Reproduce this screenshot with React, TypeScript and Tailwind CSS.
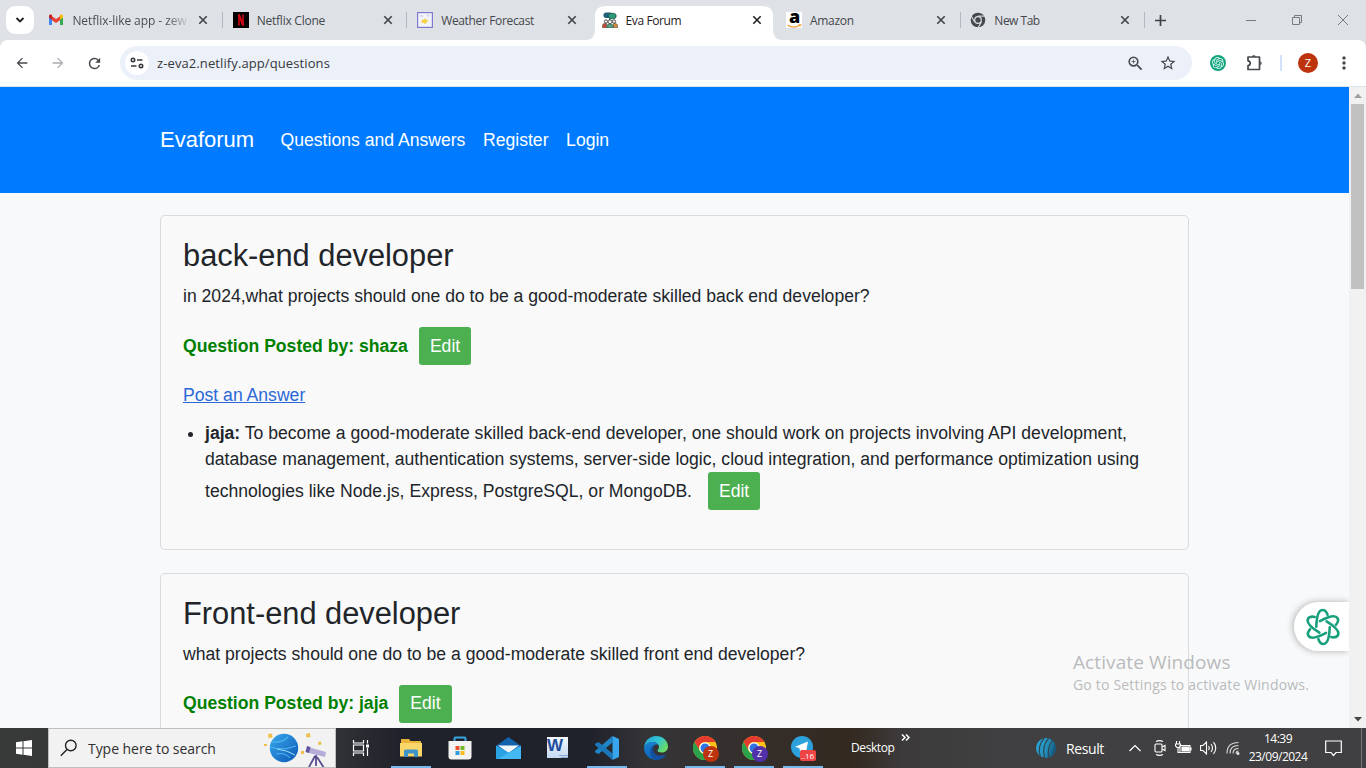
import React from "react";
import {
  MdArrowBack,
  MdArrowForward,
  MdRefresh,
  MdZoomIn,
  MdStarOutline,
  MdMoreVert,
} from "react-icons/md";
import { SiOpenai } from "react-icons/si";

const ui = "font-['Open_Sans','Noto_Sans',sans-serif]";

function GmailIcon() {
  return (
    <svg width="16" height="16" viewBox="0 0 16 16">
      <path d="M1 4v9h3V7z" fill="#4285f4" />
      <path d="M15 4v9h-3V7z" fill="#34a853" />
      <path d="M4 4.2v4L8 11l4-2.8v-4L8 7z" fill="#ea4335" />
      <path d="M1 4.2C1 2.6 2.6 2.2 3.8 3L4 3.2v4.6L1 5.8z" fill="#c5221f" />
      <path d="M15 4.2c0-1.6-1.6-2-2.8-1.2l-.2.2v4.6l3-2z" fill="#fbbc04" />
    </svg>
  );
}

function NetflixIcon() {
  return (
    <svg width="16" height="16" viewBox="0 0 16 16">
      <rect width="16" height="16" fill="#050000" />
      <path d="M5 2.5h2v11H5zM9 2.5h2v11H9z" fill="#a80710" />
      <path d="M5 2.5h2l4 11H9z" fill="#e50914" />
    </svg>
  );
}

function WeatherIcon() {
  return (
    <svg width="16" height="16" viewBox="0 0 16 16">
      <rect x=".6" y=".6" width="14.8" height="14.8" fill="#f3f4fb" stroke="#7f7ad0" strokeWidth="1.2" />
      <path d="M3 3h3v2H3zM9.500 2.500h3v2h-3z" fill="#d9dcf0" />
      <path d="M8 6l1.300 1.800 2.700.7-2.300 1.500-1.200 2.200-2-1.500-3 .3 1.500-2L4.500 8l2.500-.5z" fill="#f3d24a" />
    </svg>
  );
}

function ForumIcon() {
  return (
    <svg width="16" height="16" viewBox="0 0 16 16">
      <rect x="1.500" y=".5" width="9" height="5.500" rx="2.700" fill="#1f5f78" />
      <path d="M8 1.300h3.500a2.700 2.700 0 010 5.400H9L7.500 8V6a2.600 2.600 0 01.5-4.700z" fill="#2c9a76" stroke="#174a4c" strokeWidth=".7" />
      <circle cx="4" cy="9.500" r="1.700" fill="#f4ece6" stroke="#333" strokeWidth=".8" />
      <circle cx="12" cy="9.500" r="1.700" fill="#f4ece6" stroke="#333" strokeWidth=".8" />
      <circle cx="8" cy="9.800" r="1.900" fill="#fff" stroke="#333" strokeWidth=".8" />
      <path d="M.5 15.700v-2q0-2.200 2.300-2.200h1.700v4.200z" fill="#c9483c" stroke="#443" strokeWidth=".6" />
      <path d="M15.500 15.700v-2q0-2.200-2.300-2.200h-1.700v4.200z" fill="#d98b3a" stroke="#443" strokeWidth=".6" />
      <path d="M4.800 15.700v-1.500Q5 12 8 12t3.200 2.200v1.500z" fill="#4fa487" stroke="#343" strokeWidth=".6" />
    </svg>
  );
}

function AmazonIcon() {
  return (
    <span className="relative block h-4 w-4 bg-white">
      <span className="absolute -top-[7px] left-[3px] font-['Open_Sans',sans-serif] text-[18px] leading-[22px] font-extrabold text-black">a</span>
      <svg className="absolute top-0 left-0" width="16" height="16" viewBox="0 0 16 16">
        <path d="M1.500 13q6 4 12.500.3" fill="none" stroke="#f59a2f" strokeWidth="1.200" />
        <path d="M12.500 12.500l2.700-.2-1 2.300" fill="none" stroke="#f59a2f" strokeWidth=".8" />
      </svg>
    </span>
  );
}

function NewTabIcon() {
  return (
    <svg width="16" height="16" viewBox="-8 -8 16 16">
      <circle r="7.300" fill="#45484c" />
      <g stroke="#dee1e6" strokeWidth="1.100">
        {[0, 120, 240].map((a) => (
          <path key={a} transform={`rotate(${a})`} d="M0-3.900H7.500" />
        ))}
      </g>
      <circle r="3.900" fill="#dee1e6" />
      <circle r="2.700" fill="#45484c" />
    </svg>
  );
}

function Cross({ color }: { color: string }) {
  return (
    <svg width="10" height="10" viewBox="0 0 10 10" stroke={color} strokeWidth="1.600">
      <path d="M1.300 1.300l7.400 7.400M8.700 1.300l-7.400 7.400" />
    </svg>
  );
}

type TabInfo = { icon: React.ReactNode; title: string; cls: string; active?: boolean; sep?: boolean };

const tabs: TabInfo[] = [
  { icon: <GmailIcon />, title: "Netflix-like app - zew", cls: "tracking-[-0.060px]", sep: true },
  { icon: <NetflixIcon />, title: "Netflix Clone", cls: "tracking-[-0.250px]", sep: true },
  { icon: <WeatherIcon />, title: "Weather Forecast", cls: "tracking-[-0.350px]" },
  { icon: <ForumIcon />, title: "Eva Forum", cls: "tracking-[-0.400px]", active: true },
  { icon: <AmazonIcon />, title: "Amazon", cls: "tracking-[-0.300px]", sep: true },
  { icon: <NewTabIcon />, title: "New Tab", cls: "tracking-[-0.500px]", sep: true },
];

function Tab({ tab }: { tab: TabInfo }) {
  return (
    <div className="relative h-full w-[184.4px] shrink-0">
      {tab.active && (
        <svg className="absolute top-[6px] -left-[8px]" width="198" height="34" viewBox="0 0 198 34" fill="#fff">
          <path d="M0 34Q10 34 10 24V10Q10 0 20 0H178Q188 0 188 10V24Q188 34 198 34z" />
        </svg>
      )}
      <div className="relative flex h-full items-center pl-[8.400px]">
        <span className="flex h-4 w-4 items-center justify-center">{tab.icon}</span>
        <span
          className={
            "mt-[2px] ml-2 w-[118px] text-[12px] leading-[18px] whitespace-nowrap " +
            tab.cls +
            (tab.active ? " text-[#1f2023]" : " text-[#45484c]")
          }
        >
          <span className={tab.title.length > 20 ? "block bg-gradient-to-r from-[#45484c] from-80% to-[#dee1e6] bg-clip-text text-transparent" : "block"}>
            {tab.title}
          </span>
        </span>
        <span className="ml-[8px]"><Cross color={tab.active ? "#222" : "#3f4246"} /></span>
      </div>
      {tab.sep && <span className="absolute top-3 right-[1.400px] h-4 w-px bg-[#b4b8be]" />}
    </div>
  );
}

function TabStrip() {
  return (
    <div className="flex h-10 shrink-0 bg-[#dee1e6]">
      <div className="flex w-10 shrink-0 items-center">
        <div className="ml-[6px] flex h-7 w-7 items-center justify-center rounded-[9px] bg-white">
          <svg width="10" height="8" viewBox="0 0 10 8" fill="none" stroke="#202124" strokeWidth="1.800"><path d="M1.500 2L5 5.500 8.500 2" /></svg>
        </div>
      </div>
      {tabs.map((t) => <Tab key={t.title} tab={t} />)}
      <div className="flex items-center pl-[9px]">
        <svg width="11" height="11" viewBox="0 0 11 11" stroke="#3f4246" strokeWidth="1.700"><path d="M5.500 0v11M0 5.500h11" /></svg>
      </div>
      <div className="ml-auto flex items-center gap-[36px] pr-[18px]">
        <svg width="10" height="10" viewBox="0 0 10 10" stroke="#777a7e"><path d="M0 5.500h10" /></svg>
        <svg width="10" height="10" viewBox="0 0 10 10" fill="none" stroke="#777a7e"><path d="M.5 2.500h7v7h-7zM2.500 2.500v-2h7v7h-2" /></svg>
        <svg width="10" height="10" viewBox="0 0 10 10" stroke="#777a7e"><path d="M0 0l10 10M10 0L0 10" /></svg>
      </div>
    </div>
  );
}

function PuzzleIcon() {
  return (
    <svg className="ml-[20px]" width="18" height="18" viewBox="0 0 18 18" fill="none" stroke="#45484c" strokeWidth="1.700" strokeLinejoin="round">
      <path d="M2 3h11.500v12.500H2v-3.800Q4.200 11.300 4.200 9.200T2 6.800z" />
      <path d="M5.800 2.700a2.100 2.100 0 014 0zM14.200 7.300a2.100 2.100 0 010 4z" fill="#45484c" stroke="none" />
    </svg>
  );
}

function Toolbar() {
  return (
    <div className="shrink-0 bg-[#dee1e6]">
      <div className="flex h-[47px] items-center rounded-t-lg border-b border-[#dbe3ea] bg-white text-[#45484c]">
        <div className="flex w-[120px] items-center gap-5 pl-[14px]">
          <MdArrowBack size={16} />
          <MdArrowForward size={16} color="#a9acb0" />
          <MdRefresh size={17} />
        </div>
        <div className="flex h-[34px] w-[1072px] items-center rounded-full bg-[#ecf0f9] pl-[5px]">
          <span className="flex h-6 w-6 items-center justify-center rounded-full bg-white">
            <svg width="14" height="12" viewBox="0 0 14 12" fill="none" stroke="#35383c" strokeWidth="1.600">
              <circle cx="3" cy="3" r="1.700" /><path d="M7 3h5.500M1 9h5.500" /><circle cx="11" cy="9" r="1.700" />
            </svg>
          </span>
          <span className="mt-[2px] ml-2 text-[13px] tracking-[0.100px] text-[#35383c]">z-eva2.netlify.app/questions</span>
          <span className="mr-[15px] ml-auto flex items-center gap-[14px]">
            <MdZoomIn size={19} />
            <MdStarOutline size={18} />
          </span>
        </div>
        <span className="ml-[18px] flex h-4 w-4 items-center justify-center rounded-full bg-[#16a37f]">
          <SiOpenai size={12} color="#e8fff8" />
        </span>
        <PuzzleIcon />
        <span className="ml-[16px] h-4 w-[2px] bg-[#d3e2fb]" />
        <span className="ml-[16px] flex h-5 w-5 items-center justify-center rounded-full bg-[#bd330d] text-[11px] text-white">Z</span>
        <MdMoreVert className="ml-[16px]" size={20} />
      </div>
    </div>
  );
}

function EditButton() {
  return (
    <button className="ml-[11px] inline-block h-[38px] rounded-[3px] bg-[#4caf50] px-[11px] py-[5.800px] leading-[26.400px] text-white">Edit</button>
  );
}

function QuestionCard({ title, body, author, children }: { title: string; body: string; author: string; children?: React.ReactNode }) {
  return (
    <section className="mb-[22.500px] rounded-[5px] border border-[#d9dcdf] bg-[#f9f9f9] p-[22px] pt-[21.200px]">
      <h3 className="mb-[8.800px] text-[30.800px] leading-[37px]">{title}</h3>
      <p className="mb-[17.600px]">{body}</p>
      <div className="mb-[17px] flex h-[38px] items-center font-bold text-[#008000]">
        <span>Question Posted by: {author}</span>
        <span className="font-normal"><EditButton /></span>
      </div>
      {children}
    </section>
  );
}

function Knot() {
  return (
    <svg width="36" height="38" viewBox="-18 -19 36 38" fill="none" stroke="#17a07c" strokeWidth="2.600" strokeLinecap="round">
      {[0, 60, 120, 180, 240, 300].map((a) => (
        <path key={a} transform={`rotate(${a})`} d="M-6.700-.3C-6.500-7-5.200-17-.3-17c2.600 0 4 2.200 4.900 4.800" />
      ))}
    </svg>
  );
}

function Page() {
  return (
    <div className="relative flex h-[641px] shrink-0 overflow-hidden">
      <div className="w-[1349px] overflow-hidden bg-[#f8f9fa] font-['Liberation_Sans',Arial,sans-serif] text-[17.600px] leading-[26.400px] text-[#212529]">
        <nav className="flex h-[106px] items-center bg-[#007bff] pl-[160px] text-white">
          <span className="text-[22px]">Evaforum</span>
          <span className="ml-[26.400px]">Questions and Answers</span>
          <span className="ml-[17.600px]">Register</span>
          <span className="ml-[17.600px]">Login</span>
        </nav>
        <main className="mt-[22px] ml-[160px] w-[1029px]">
          <QuestionCard title="back-end developer" body="in 2024,what projects should one do to be a good-moderate skilled back end developer?" author="shaza">
            <a className="mb-[11.300px] block text-[#2a68d8] underline">Post an Answer</a>
            <ul className="mb-[17.200px] list-disc pl-[22px] leading-[26.100px]">
              <li>
                <strong>jaja:</strong> To become a good-moderate skilled back-end developer, one should work on projects involving API development,
                <br />
                database management, authentication systems, server-side logic, cloud integration, and performance optimization using
                <br />
                technologies like Node.js, Express, PostgreSQL, or MongoDB. <EditButton />
              </li>
            </ul>
          </QuestionCard>
          <QuestionCard title="Front-end developer" body="what projects should one do to be a good-moderate skilled front end developer?" author="jaja" />
        </main>
      </div>
      <div className="flex w-[17px] flex-col items-center bg-[#f1f1f1]">
        <div className="flex h-[17px] items-center"><svg width="8" height="5" fill="#a0a0a0"><path d="M0 5l4-4.500L8 5z" /></svg></div>
        <div className="h-[185px] w-[13px] bg-[#c1c1c1]" />
        <div className="mt-auto flex h-[17px] items-center"><svg width="8" height="5" fill="#444"><path d="M0 0l4 4.500L8 0z" /></svg></div>
      </div>
      <div className="absolute top-[515px] left-[1294px] h-[49px] w-[55px] overflow-visible rounded-l-full bg-white pt-[6px] pl-[11px] shadow-[-1px_0_7px_rgba(0,0,0,0.3)] [clip-path:inset(-12px_0_-12px_-12px)]">
        <Knot />
      </div>
      <div className="absolute top-[562px] left-[1073px] whitespace-nowrap text-[#b9bbbd]">
        <div className="text-[19px] leading-[26px] tracking-[0.100px]">Activate Windows</div>
        <div className="text-[14px] leading-[19px] tracking-[0.190px]">Go to Settings to activate Windows.</div>
      </div>
    </div>
  );
}

function Chrome({ badge, letter }: { badge: string; letter: string }) {
  return (
    <span className="relative block h-6 w-6">
      <svg width="24" height="24" viewBox="-12 -12 24 24">
        <circle r="12" fill="#fbc116" />
        <path d="M-10.400-6A12 12 0 0110.400-6H0A6 6 0 00-5.200 3z" fill="#e33b2e" />
        <path d="M-10.400-6A12 12 0 000 12L5.200 3A6 6 0 01-5.200 3z" fill="#2aa14b" />
        <circle r="5.800" fill="#fff" /><circle r="4.500" fill="#2f74e0" />
      </svg>
      <span className={"absolute top-[10px] left-[10px] flex h-4 w-4 items-center justify-center rounded-full text-[9px] text-white " + badge}>{letter}</span>
    </span>
  );
}

function Explorer() {
  return (
    <svg width="22" height="20" viewBox="0 0 22 20">
      <path d="M1 1h8l1.500 2H21v15H1z" fill="#e8b43b" /><path d="M0 5h22v13.500H0z" fill="#fbd668" />
      <path d="M4 13q0-1.500 1.500-1.500h11Q18 11.500 18 13v6h-4v-3.500H8V19H4z" fill="#3e93c9" />
    </svg>
  );
}
function Store() {
  return (
    <svg width="24" height="24" viewBox="0 0 24 24">
      <path d="M6.500 6V2.500q0-1 1-1h9q1 0 1 1V6" fill="none" stroke="#38a5dc" strokeWidth="2" />
      <path d="M.5 5h23v15.500q0 3-3 3h-17q-3 0-3-3z" fill="#f3f3f3" />
      <path d="M7.500 10h4v4h-4z" fill="#e8502c" /><path d="M12.500 10h4v4h-4z" fill="#76b82a" />
      <path d="M7.500 15h4v4h-4z" fill="#2d9fdd" /><path d="M12.500 15h4v4h-4z" fill="#f9bd20" />
    </svg>
  );
}
function Mail() {
  return (
    <svg width="25" height="22" viewBox="0 0 25 22">
      <path d="M0 9L12.500 0 25 9v13H0z" fill="#1263ac" /><path d="M2 8.500h21L12.500 16z" fill="#f2f7fb" />
      <path d="M0 8.500L12.500 15.500 20 22H0z" fill="#2aa3e5" /><path d="M25 8.500L2 22h23z" fill="#43b8f2" />
    </svg>
  );
}
function Word() {
  return (
    <span className="relative mb-[2px] block h-[21px] w-[21px] bg-gradient-to-b from-[#f4f8fd] to-[#c5d8ef]">
      <span className="absolute top-0 left-0 font-['Liberation_Sans',sans-serif] text-[17px] leading-[18px] font-bold text-[#1f4e9c]">W</span>
      <svg className="absolute right-0 bottom-0" width="10" height="6" stroke="#8baad2"><path d="M1 3.500h9M3 5.500h7" /></svg>
    </span>
  );
}
function Code() {
  return (
    <svg width="24" height="24" viewBox="0 0 24 24">
      <path d="M17.500 0v6.500L3.500 18 0 16.200v-1.300z" fill="#1f86c9" />
      <path d="M17.500 24v-6.500L3.500 6 0 7.800v1.300z" fill="#1a77ba" />
      <path d="M17.500 0L24 3v18l-6.500 3z" fill="#38a6ee" />
    </svg>
  );
}
function Edge() {
  return (
    <svg width="24" height="24" viewBox="0 0 24 24">
      <defs>
        <linearGradient id="ea" x1="0" y1="0" x2="1" y2=".6"><stop stopColor="#239fd6" /><stop offset=".55" stopColor="#32c5d4" /><stop offset="1" stopColor="#6bdd63" /></linearGradient>
        <linearGradient id="eb" x1="0" y1="0" x2="0" y2="1"><stop stopColor="#1983d3" /><stop offset="1" stopColor="#0e62b5" /></linearGradient>
      </defs>
      <path d="M0 11.500C.5 5 5.500 0 12 0c7 0 12 5 12 10.500 0 3.500-2.500 6-6 6-3 0-4.500-1-4.500-2 0-.8 1.500-1.500 1.500-3.500C15 8 12 6 8.500 6 4 6 1 8.500 0 11.500z" fill="url(#ea)" />
      <path d="M0 12C.5 8.500 4 6 8.500 6c3 0 5 1.200 6 2.800C9 7.500 5 13 8 18c2 4 5.500 5.500 8 5.200A12 12 0 010 12z" fill="url(#eb)" />
      <path d="M11.500 9.300C7 12 9 20 17 19.500c2.500 0 4.500-1.500 5.300-1-2.800 4.500-8 6.500-12 4.700C3.500 19.500 5.500 10 11.500 9.300z" fill="#1450a0" />
    </svg>
  );
}
function Telegram() {
  return (
    <span className="relative block h-6 w-6">
      <svg width="22" height="22" viewBox="0 0 22 22"><circle cx="11" cy="11" r="11" fill="#2ca1dc" /><path d="M4 10.800L17 5.500 15 16.500l-4-3-2 2.200-.5-3.500z" fill="#fff" /></svg>
      <span className="absolute top-[14px] left-[9px] h-[11px] w-4 rounded-[2px] bg-[#ee4444] text-center text-[8px] leading-[11px] text-white">..16</span>
    </span>
  );
}

const apps: { node: React.ReactNode; open?: boolean }[] = [
  { node: <Explorer />, open: true },
  { node: <Store /> },
  { node: <Mail /> },
  { node: <Word /> },
  { node: <Code />, open: true },
  { node: <Edge /> },
  { node: <Chrome badge="bg-[#bd330d]" letter="Z" />, open: true },
  { node: <Chrome badge="bg-[#5130a8]" letter="Z" />, open: true },
  { node: <Telegram />, open: true },
];

function SearchArt() {
  return (
    <svg width="68" height="37" viewBox="262 730 68 37">
      <defs><linearGradient id="pl" x1="0" y1="0" x2="1" y2="1"><stop stopColor="#38a9ec" /><stop offset="1" stopColor="#0b56b4" /></linearGradient></defs>
      <circle cx="283" cy="748" r="14.200" fill="url(#pl)" />
      <path d="M271 742q10 1 16-5M269 747q12 4 26-1M275 754q9-2 14 4" fill="none" stroke="#4fb4ef" strokeWidth="1.100" />
      <path d="M276 749q10 1 18 6" fill="none" stroke="#9bdcfb" strokeWidth="1" />
      <path d="M267 734l4-.5.500 4-4 .5zM305 734l4-1 .5 4-4 .5zM263 744h3v2h-3zM317 742l3-.5.500 3-3 .5zM300 751h3v3h-3z" fill="#ecc04a" />
      <path d="M307 747l18 5-1 5-18-4.500z" fill="#b5add8" /><path d="M306 746l3.500 1-1.500 6-3.500-1z" fill="#6654a0" />
      <path d="M315 755v11M314 756l-6 11M316 757l7 11" stroke="#5c4a8f" strokeWidth="1.800" />
    </svg>
  );
}

function Taskbar() {
  return (
    <div className="flex h-10 shrink-0 bg-[linear-gradient(90deg,#383939_0px,#303135_340px,#20222b_400px,#20222b_590px,#343437_645px,#35302f_730px,#33291f_850px,#3c3a3a_900px,#404042_1000px,#404042_1366px)] text-white">
      <div className="flex w-[48px] items-center justify-center">
        <svg width="16" height="16" viewBox="0 0 16 16" fill="#fff"><path d="M0 2.200L6.500 1.300V7.500H0zM7.500 1.200L16 0v7.500H7.500zM0 8.500h6.500v6.200L0 13.800zM7.500 8.500H16V16l-8.500-1.200z" /></svg>
      </div>
      <div className="flex w-[288px] items-center border border-[#bfbfbf] bg-[#f2f2f2] pl-[11px] text-[#303030]">
        <svg width="18" height="18" viewBox="0 0 18 18" fill="none" stroke="#222" strokeWidth="1.400"><circle cx="10.800" cy="6.500" r="5.300" /><path d="M7 10.500L.8 16.800" /></svg>
        <span className="ml-[10px] text-[14px] tracking-[-0.050px] whitespace-nowrap">Type here to search</span>
        <span className="mr-1 ml-auto"><SearchArt /></span>
      </div>
      <div className="flex w-[50px] items-center justify-center">
        <svg width="18" height="16" viewBox="0 0 18 16" fill="none" stroke="#fff" strokeWidth="1.200"><path d="M1.500 0v3h10V0M1.500 16v-3h10v3M1.500 5h10v6h-10zM15.500 0v3.500M15.500 8v8" /><path d="M14 4.500h3v3h-3z" fill="#fff" stroke="none" /></svg>
      </div>
      {apps.map((a, i) => (
        <div key={i} className="flex w-[49px] items-center justify-center">
          <div className={"flex h-10 w-10 items-center justify-center " + (a.open ? "shadow-[inset_0_-2px_0_#76b9ed]" : "")}>{a.node}</div>
        </div>
      ))}
      <span className="ml-[24px] w-[43px] self-center text-[12px] tracking-[-0.400px]">Desktop</span>
      <svg className="mt-[6px] ml-[7px]" width="9" height="7" viewBox="0 0 9 7" fill="none" stroke="#fff" strokeWidth="1.500"><path d="M1 .5l3 3-3 3M5 .5l3 3-3 3" /></svg>
      <div className="ml-auto flex items-center">
        <svg width="20" height="22" viewBox="0 0 20 22">
          <defs>
            <linearGradient id="ball" x1="0" y1="0" x2="1" y2=".3"><stop stopColor="#2aa9d6" /><stop offset=".6" stopColor="#2592bd" /><stop offset="1" stopColor="#155a82" /></linearGradient>
          </defs>
          <circle cx="10" cy="11" r="10" fill="url(#ball)" />
          <path d="M8 1.500Q1 9 4.500 20M12.500 1.500Q5.500 9 8.500 21M16.500 3.500q-6 7-3.500 17" fill="none" stroke="#2f4450" strokeWidth="1.100" />
        </svg>
        <span className="ml-[10px] w-[38px] text-[14px] tracking-[-0.400px]">Result</span>
        <svg className="ml-[25px]" width="12" height="8" viewBox="0 0 12 8" fill="none" stroke="#fff" strokeWidth="1.200"><path d="M.5 7L6 1.500 11.500 7" /></svg>
        <svg className="ml-[13px]" width="12" height="16" viewBox="0 0 12 16" fill="none" stroke="#fff" strokeWidth="1.100"><rect x="1" y="4" width="7" height="8" rx="1" /><path d="M8 7l3-1.500v5L8 9M2 1.500Q5.500-.2 9 1.500M2 14.500q3.500 1.700 7 0" /></svg>
        <svg className="ml-[9px]" width="17" height="14" viewBox="0 0 17 14" fill="none" stroke="#fff" strokeWidth="1.100"><path d="M5 4.500h10v7H5zM16 6.500v3M1.500 0v3M4.500 0v3M.5 3h5v2L4 6.500H2L.5 5zM3 6.500v5h2" /><path d="M7 6h7v4H7z" fill="#fff" /></svg>
        <svg className="ml-[8px]" width="17" height="14" viewBox="0 0 17 14" fill="none" stroke="#fff" strokeWidth="1.100"><path d="M.6 4.500H3L6.500 1v12L3 9.500H.6zM8.500 5q1.500 2 0 4M11 3q3 4 0 8M13.500 1.200q4.500 5.800 0 11.600" /></svg>
        <svg className="ml-[9px]" width="14" height="14" viewBox="0 0 14 14" fill="none" stroke="#d8d8d8" strokeWidth="1.100"><path d="M1 12.500Q1 1.500 12.500 1.500M4 12.500Q4 4.500 12.500 4.500M7 12.500q0-5 5.500-5M10 12.500q0-2.500 2.500-2.500" /><circle cx="12" cy="12.500" r="1" fill="#fff" /></svg>
        <div className="ml-[7px] w-[62px] text-center text-[12px] leading-[18px] tracking-[-0.500px] whitespace-nowrap"><div>14:39</div><div>23/09/2024</div></div>
        <svg className="ml-[16px]" width="17" height="17" viewBox="0 0 17 17" fill="none" stroke="#fff" strokeWidth="1.200"><path d="M.7 1h15.600v11.500H11L8.500 15.500 6 12.500H.7z" /></svg>
        <span className="ml-[19px] h-10 w-px bg-[#77777a]" />
        <span className="w-1" />
      </div>
    </div>
  );
}

export default function App() {
  return (
    <div className={"flex h-[768px] w-[1366px] flex-col overflow-hidden bg-white " + ui}>
      <TabStrip />
      <Toolbar />
      <Page />
      <Taskbar />
    </div>
  );
}
